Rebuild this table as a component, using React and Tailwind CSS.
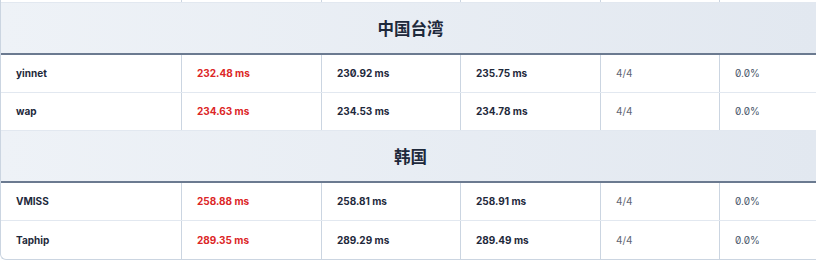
import React from "react";

// latency table for two regions
const groups = [
  {
    name: "中国台湾",
    rows: [
      { isp: "yinnet", min: "232.48 ms", avg: "230.92 ms", max: "235.75 ms", recv: "4/4", loss: "0.0%" },
      { isp: "wap", min: "234.63 ms", avg: "234.53 ms", max: "234.78 ms", recv: "4/4", loss: "0.0%" },
    ],
  },
  {
    name: "韩国",
    rows: [
      { isp: "VMISS", min: "258.88 ms", avg: "258.81 ms", max: "258.91 ms", recv: "4/4", loss: "0.0%" },
      { isp: "Taphip", min: "289.35 ms", avg: "289.29 ms", max: "289.49 ms", recv: "4/4", loss: "0.0%" },
    ],
  },
];

const cols = "grid grid-cols-[181px_140px_139px_140px_119px_1fr]";
const cell = "flex items-center pl-[15px] border-r border-[#cbd5e1]";

const GroupHeader = ({ name }) => (
  <div className="h-[52px] flex items-center justify-center border-b-2 border-[#6b7a90] bg-linear-to-r from-[#eef2f7] to-[#e2e8f0]">
    <span className="text-[16.5px] font-bold text-[#1e293b] [font-family:'Noto_Sans_CJK_SC',sans-serif]">
      {name}
    </span>
  </div>
);

const Row = ({ r, last }) => (
  <div className={`${cols} h-[38px] text-[10px] ${last ? "" : "border-b border-[#e2e8f0]"}`}>
    <div className={`${cell} font-bold text-[#1e293b]`}>{r.isp}</div>
    <div className={`${cell} font-bold text-[#dc2626]`}>{r.min}</div>
    <div className={`${cell} font-bold text-[#1e293b]`}>{r.avg}</div>
    <div className={`${cell} font-bold text-[#1e293b]`}>{r.max}</div>
    <div className={`${cell} text-[#5f6673]`}>{r.recv}</div>
    <div className={`${cell} text-[#475569]`}>{r.loss}</div>
  </div>
);

export default function App() {
  return (
    <div className="w-[816px] h-[260px] overflow-hidden bg-white [font-family:Inter,'Noto_Sans_CJK_SC',sans-serif] [font-feature-settings:'zero']">
      <div className="w-[820px] border-l border-b border-[#cbd5e1] rounded-bl-md overflow-hidden">
        {/* tail of the previous row */}
        <div className={`${cols} h-[3px] border-b border-[#e2e8f0]`}>
          <div className="border-r border-[#cbd5e1]" />
          <div className="border-r border-[#cbd5e1]" />
          <div className="border-r border-[#cbd5e1]" />
          <div className="border-r border-[#cbd5e1]" />
          <div className="border-r border-[#cbd5e1]" />
          <div />
        </div>
        {groups.map((g, gi) => (
          <div key={g.name}>
            <GroupHeader name={g.name} />
            {g.rows.map((r, i) => (
              <Row key={r.isp} r={r} last={gi === groups.length - 1 && i === g.rows.length - 1} />
            ))}
          </div>
        ))}
      </div>
    </div>
  );
}
